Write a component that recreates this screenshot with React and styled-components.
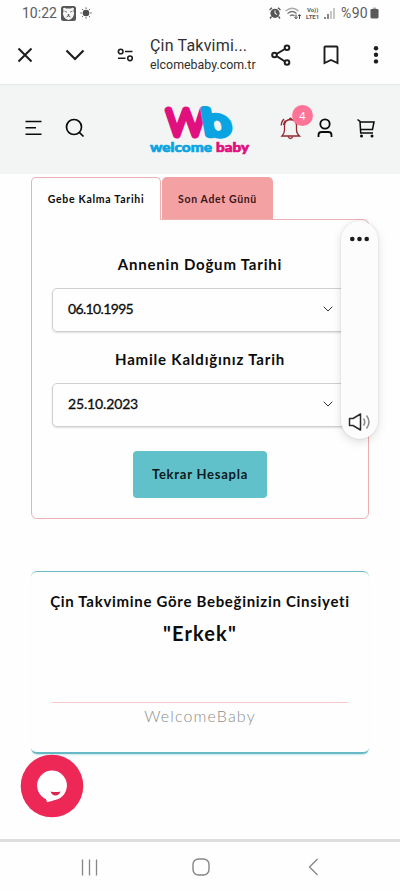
import React from 'react';
import styled, { createGlobalStyle } from 'styled-components';

const GlobalStyle = createGlobalStyle`
    * {
        box-sizing: border-box;
    }
    body {
        margin: 0;
        background: #fefefe;
        font-family: Lato, "Noto Sans", sans-serif;
        color: #0c0c0c;
    }
    svg {
        display: block;
        flex: none;
    }
`;

const Screen = styled.div`
    position: relative;
    display: flex;
    flex-direction: column;
    width: 400px;
    height: 891px;
    overflow: hidden;
`;

const StatusBar = styled.div`
    display: flex;
    justify-content: space-between;
    align-items: center;
    height: 26px;
    padding: 0 21px 0 22px;
    font-family: Roboto, sans-serif;
    font-size: 14px;
    color: #5c5c5c;
`;

const StatusGroup = styled.div`
    display: flex;
    align-items: center;
    gap: ${props => props.$gap}px;
    white-space: nowrap;
`;

const Lte = styled.div`
    width: 15px;
    font-size: 6px;
    line-height: 7px;
    font-weight: 700;
    text-align: center;
    div {
        height: 7px;
    }
`;

const Percent = styled.span`
    margin-left: 4px;
    letter-spacing: 0.3px;
`;

const BrowserBar = styled.div`
    display: flex;
    align-items: center;
    height: 59px;
    padding: 0 15px 0 16px;
    border-bottom: 1px solid #e7e9e9;
    color: #1d1d1d;
`;

const PageInfo = styled.div`
    width: 112px;
    margin: 0 8px 0 16px;
    font-family: Roboto, sans-serif;
    white-space: nowrap;
    color: #303030;
    h1 {
        margin: 0;
        font-size: 16px;
        line-height: 20px;
        font-weight: 400;
        letter-spacing: 0.2px;
    }
    p {
        margin: 0;
        font-size: 12.4px;
        line-height: 18px;
    }
`;

const BarIcon = styled.svg`
    margin-left: ${props => props.$left || 0}px;
    fill: none;
    stroke: currentColor;
    stroke-width: ${props => props.$weight || 2};
`;

const Header = styled.header`
    display: flex;
    align-items: center;
    height: 89px;
    padding: 0 22px 4px 24px;
    background: #f3f5f5;
    color: #0a0a0a;
`;

const Logo = styled.svg`
    margin: 9px 0 0 64px;
    overflow: visible;
    font-family: Lato, sans-serif;
    font-weight: 900;
    stroke-linejoin: round;
    stroke-linecap: round;
`;

const Bell = styled.div`
    position: relative;
    margin-left: 27px;
    color: #93282d;
`;

const Badge = styled.span`
    position: absolute;
    left: 12px;
    top: -11px;
    width: 21px;
    height: 21px;
    border-radius: 50%;
    background: #ff7396;
    color: #fff;
    font-size: 11px;
    line-height: 21px;
    text-align: center;
`;

const Main = styled.main`
    flex: 1;
    padding: 3px 31px 0;
`;

const Tabs = styled.div`
    display: flex;
    align-items: flex-start;
    gap: 1px;
    height: 42px;
`;

const Tab = styled.div`
    width: ${props => props.$width}px;
    height: ${props => (props.$active ? 43 : 42)}px;
    border: 1px solid ${props => (props.$active ? '#efb0b4' : '#f4a1a4')};
    border-bottom: 0;
    border-radius: 5px 5px 0 0;
    background: ${props => (props.$active ? '#fefefe' : '#f4a1a4')};
    color: ${props => (props.$active ? '#0c0c0c' : '#3b1719')};
    font-size: 10.5px;
    line-height: 43px;
    font-weight: 700;
    letter-spacing: ${props => props.$spacing}px;
    text-align: center;
    white-space: nowrap;
    z-index: 1;
`;

const Panel = styled.section`
    display: flex;
    flex-direction: column;
    height: 300px;
    padding: 31px 20px 0;
    border: 1px solid #efb0b4;
    border-radius: 0 6px 6px 6px;
`;

const Label = styled.div`
    height: 26px;
    font-size: 15px;
    line-height: 26px;
    font-weight: 700;
    letter-spacing: ${props => props.$spacing}px;
    text-align: center;
    white-space: nowrap;
`;

const Select = styled.div`
    display: flex;
    justify-content: space-between;
    align-items: center;
    height: 44px;
    margin: 11px 0 14px;
    padding: 0 14px 3px 15px;
    border: 1px solid #cfcfcf;
    border-radius: 5px;
    box-shadow: 0 1px 2px rgba(0, 0, 0, 0.13);
    font-size: 14px;
    letter-spacing: ${props => props.$spacing}px;
    -webkit-text-stroke: 0.3px #0c0c0c;
`;

const Button = styled.button`
    align-self: center;
    width: 134px;
    height: 47px;
    margin-top: 10px;
    padding: 0 0 1px;
    border: 0;
    border-radius: 4px;
    background: #61c1ca;
    color: #0d1b1c;
    font: 700 13px Lato, sans-serif;
    letter-spacing: 0.76px;
`;

const Result = styled.section`
    height: 183px;
    margin-top: 52px;
    padding: 16px 18px 0;
    border: solid #66b9c5;
    border-width: 1px 0 2px;
    border-radius: 6px;
    box-shadow: 0 2px 2px -1px rgba(90, 190, 200, 0.35);
    text-align: center;
    h2 {
        margin: 6px 0 0;
        font-size: 20px;
        line-height: 26px;
        font-weight: 700;
        letter-spacing: 1.1px;
    }
    hr {
        height: 1px;
        margin: 56px 3px 0;
        border: 0;
        background: #f8c9cc;
    }
    p {
        margin: 0;
        font-size: 16px;
        line-height: 25px;
        font-weight: 300;
        letter-spacing: 1.15px;
        color: #8d8d8d;
    }
`;

const VolumePanel = styled.aside`
    position: absolute;
    left: 341px;
    top: 221px;
    display: flex;
    flex-direction: column;
    align-items: center;
    justify-content: space-between;
    width: 37px;
    height: 218px;
    padding: 15px 0 7px;
    border-radius: 19px;
    background: #fcfcfc;
    box-shadow: 0 3px 10px rgba(0, 0, 0, 0.13), 0 0 2px rgba(0, 0, 0, 0.13);
    z-index: 2;
`;

const ChatButton = styled.div`
    position: absolute;
    left: 20px;
    top: 754px;
`;

const NavBar = styled.nav`
    display: flex;
    align-items: center;
    height: 52px;
    padding: 1px 81px 0;
    border-top: 3px solid #dedede;
    color: #858585;
`;

const Chevron = () => (
    <svg width="10" height="6" viewBox="0 0 10 6" fill="none" stroke="#333" strokeWidth="1">
        <path d="M0.7 0.7 5 5 9.3 0.7" />
    </svg>
);

const Status = () => (
    <StatusBar>
        <StatusGroup $gap={4}>
            <span>10:22</span>
            <svg width="15" height="15" viewBox="0 0 15 15">
                <rect width="15" height="15" rx="2.5" fill="#565656" />
                <path d="M2 2.5Q3.5 1 5 2.5h5Q11.5 1 13 2.5L12.5 5Q14 8 12 11Q10 14 7.5 14T3 11Q1 8 2.5 5Z" fill="#f5f5f5" />
                <path d="M3.5 5 6 6.3M11.5 5 9 6.3M5.5 11Q7.5 9 9.5 11" stroke="#565656" fill="none" strokeWidth="0.8" />
                <circle cx="7.5" cy="9" r="1" fill="#565656" />
            </svg>
            <svg width="12" height="12" viewBox="0 0 12 12">
                <circle cx="6" cy="6" r="3.3" fill="#4d4d4d" />
                <path
                    d="M6 0.3V2M6 10v1.7M0.3 6H2M10 6h1.7M2 2l1.1 1.1M8.9 8.9 10 10M2 10l1.1-1.1M8.9 3.1 10 2"
                    stroke="#5b5b5b"
                    strokeWidth="0.9"
                />
            </svg>
        </StatusGroup>
        <StatusGroup $gap={2}>
            <svg width="12" height="12" viewBox="0 0 12 12" fill="#555">
                <circle cx="6" cy="6.3" r="4.6" />
                <path d="M0.5 3 3 0.8M11.5 3 9 0.8M2.5 9.5 1 11.5M9.5 9.5 11 11.5" stroke="#555" strokeWidth="1.4" />
                <path d="M6 3.5v3l2.2 1" stroke="#fff" fill="none" />
            </svg>
            <svg width="20" height="13" viewBox="-3 0 17 13" fill="none" stroke="#777">
                <path d="M-2 4Q5-1.5 11 4" stroke="#aaa" strokeWidth="1.3" />
                <path d="M0 6.5Q5 2.5 9 6.5M2.5 9Q5 7 7 9" strokeWidth="1.3" />
                <path d="M8.5 7.5v4.2M7 10.2l1.5 1.5 1.5-1.5M12 12V7.7M10.5 9.2l1.5-1.5L13.5 9.2" stroke="#444" />
            </svg>
            <Lte>
                <div>Vo))</div>
                <div>LTE1</div>
            </Lte>
            <svg width="13" height="12" viewBox="-2 0 13 12">
                <path d="M1 10v2M4 7v5" stroke="#555" strokeWidth="1.4" />
                <path d="M7 4v8M10 1v11" stroke="#aaa" strokeWidth="1.3" />
            </svg>
            <Percent>%90</Percent>
            <svg width="9" height="12" viewBox="0 0 10 12" fill="#5a5a5a">
                <path d="M3 0h4v2H3z" fill="#aaa" />
                <rect x="0.5" y="1.5" width="9" height="10.5" rx="1.5" />
            </svg>
        </StatusGroup>
    </StatusBar>
);

const Browser = () => (
    <BrowserBar>
        <BarIcon width="18" height="18" viewBox="0 0 18 18">
            <path d="M2.5 2.5 15.5 15.5M15.5 2.5 2.5 15.5" />
        </BarIcon>
        <BarIcon $left={31} $weight={2.2} width="20" height="14" viewBox="0 0 20 14">
            <path d="M1.5 2.5 10 11 18.5 2.5" />
        </BarIcon>
        <BarIcon $left={32} $weight={1.6} width="17" height="14" viewBox="0 0 17 14">
            <circle cx="3.7" cy="3.5" r="2.3" />
            <circle cx="13" cy="10.3" r="2.3" />
            <path d="M8 3.5h7.5M1 10.3h7.5" />
        </BarIcon>
        <PageInfo>
            <h1>Çin Takvimi...</h1>
            <p>elcomebaby.com.tr</p>
        </PageInfo>
        <BarIcon $left={1} width="20" height="22" viewBox="0 0 20 22">
            <path d="M15.5 4 4 11l11.5 7.5" />
            <g fill="#fefefe">
                <circle cx="16" cy="3.7" r="2.3" />
                <circle cx="3.5" cy="11" r="2.3" />
                <circle cx="16" cy="18.5" r="2.3" />
            </g>
        </BarIcon>
        <BarIcon $left={32} $weight={1.9} width="16" height="20" viewBox="0 0 16 20">
            <path d="M1.5 18V2.5Q1.5 1.5 2.5 1.5H13.5Q14.5 1.5 14.5 2.5V18L8 15Z" />
        </BarIcon>
        <BarIcon $left={33} width="8" height="20" viewBox="0 0 8 20">
            <g fill="currentColor" stroke="none">
                <circle cx="4" cy="3.2" r="2.2" />
                <circle cx="4" cy="9.8" r="2.2" />
                <circle cx="4" cy="16.4" r="2.2" />
            </g>
        </BarIcon>
    </BrowserBar>
);

const SiteHeader = () => (
    <Header>
        <BarIcon $weight={1.6} width="18" height="16" viewBox="0 0 18 16">
            <path d="M1.5 1.5h16M1.5 7.8h10.5M1.5 14.2h16" />
        </BarIcon>
        <BarIcon $left={23} $weight={1.7} width="20" height="20" viewBox="0 0 20 20">
            <circle cx="9" cy="9" r="7.5" />
            <path d="M14.3 14.3 18.5 18.5" />
        </BarIcon>
        <Logo width="104" height="56" viewBox="0 0 104 56">
            <text x="18" y="31" fontSize="36" fontWeight="100" textLength="38" lengthAdjust="spacingAndGlyphs" fill="#e0117f" stroke="#e0117f" strokeWidth="7">W</text>
            <text transform="translate(55 30.500) skewX(10)" fontFamily="'DejaVu Sans'" fontSize="34" fontWeight="200" textLength="29" lengthAdjust="spacingAndGlyphs" fill="#0ba4e2" stroke="#0ba4e2" strokeWidth="6.5">b</text>
            <text x="1" y="48" fontSize="13.5" textLength="62" lengthAdjust="spacingAndGlyphs" fill="#0ba4e2" stroke="#0ba4e2" strokeWidth="0.7">welcome</text>
            <text x="67" y="48" fontSize="13.5" textLength="33" lengthAdjust="spacingAndGlyphs" fill="#e0117f" stroke="#e0117f" strokeWidth="0.7">baby</text>
        </Logo>
        <Bell>
            <svg width="21" height="24" viewBox="0 0 21 24" fill="none" stroke="currentColor" strokeWidth="1.3">
                <path d="M2 20Q4.5 17.5 4.5 14V9.5Q4.5 4 10.5 3.5Q16.5 4 16.5 9.5V14Q16.5 17.5 19.5 20Z" />
                <path d="M8 20.5Q10.5 24.5 13 20.5M9.2 3.5Q10.5 0.8 11.8 3.5M1.2 9.5Q1.5 5 4 3M3.5 9Q4 6 5.5 4.5" />
            </svg>
            <Badge>4</Badge>
        </Bell>
        <BarIcon $left={16} $weight={1.8} width="16" height="20" viewBox="0 0 16 20">
            <circle cx="8" cy="6" r="4.7" />
            <path d="M1.5 19V17Q1.5 14 4.5 14H11.5Q14.5 14 14.5 17V19" />
        </BarIcon>
        <BarIcon $left={23} $weight={1.5} width="20" height="20" viewBox="0 0 20 20">
            <path d="M1.5 1.5 4 3.5 4.7 15H17M4 4H18L16.5 11.5H4.5" />
            <g fill="currentColor" stroke="none">
                <circle cx="5.5" cy="18" r="1.5" />
                <circle cx="16" cy="18" r="1.5" />
            </g>
        </BarIcon>
    </Header>
);

export default function App() {
    return (
        <Screen>
            <GlobalStyle />
            <Status />
            <Browser />
            <SiteHeader />
            <Main>
                <Tabs>
                    <Tab $active $width={130} $spacing={0.72}>Gebe Kalma Tarihi</Tab>
                    <Tab $width={111} $spacing={0.65}>Son Adet Günü</Tab>
                </Tabs>
                <Panel>
                    <Label $spacing={0.8}>Annenin Doğum Tarihi</Label>
                    <Select $spacing={-0.65}>06.10.1995 <Chevron /></Select>
                    <Label $spacing={0.8}>Hamile Kaldığınız Tarih</Label>
                    <Select $spacing={-0.15}>25.10.2023 <Chevron /></Select>
                    <Button>Tekrar Hesapla</Button>
                </Panel>
                <Result>
                    <Label $spacing={0.7}>Çin Takvimine Göre Bebeğinizin Cinsiyeti</Label>
                    <h2>"Erkek"</h2>
                    <hr />
                    <p>WelcomeBaby</p>
                </Result>
            </Main>
            <VolumePanel>
                <svg width="21" height="6" viewBox="0 0 21 6" fill="#1c1c1c">
                    <circle cx="3.3" cy="3" r="2.3" />
                    <circle cx="10.5" cy="3" r="2.3" />
                    <circle cx="17.7" cy="3" r="2.3" />
                </svg>
                <svg width="23" height="20" viewBox="0 0 23 20" fill="none" strokeWidth="1.5">
                    <path d="M1.5 6.5H5L12.5 2V18L5 13.5H1.5Z" stroke="#2b2b2b" strokeLinejoin="round" />
                    <path d="M15.5 6.5Q18 10 15.5 13.5M18.5 3.5Q23.5 10 18.5 16.5" stroke="#8b8b8b" />
                </svg>
            </VolumePanel>
            <ChatButton>
                <svg width="64" height="64" viewBox="0 0 64 64">
                    <circle cx="32" cy="32" r="31.3" fill="#ed2756" />
                    <circle cx="32" cy="31.5" r="14.9" fill="#fff" />
                    <path d="M25 42 27 48.3Q37 46 44 40Z" fill="#fff" />
                    <path d="M30.5 37.5Q35.5 38.5 40.5 37.5Q39 41.5 35.5 41.5T30.5 37.5Z" fill="#d92550" />
                </svg>
            </ChatButton>
            <NavBar>
                <BarIcon $weight={1.3} width="17" height="17" viewBox="0 0 17 17">
                    <path d="M1.5 0.5v16M8.5 0.5v16M15.5 0.5v16" />
                </BarIcon>
                <BarIcon $left={94} $weight={1.4} width="18" height="18" viewBox="0 0 18 18">
                    <rect x="1" y="1" width="16" height="16" rx="5.5" />
                </BarIcon>
                <BarIcon $left={98} $weight={1.3} width="11" height="18" viewBox="0 0 11 18">
                    <path d="M9.5 1 1.5 9 9.5 17" />
                </BarIcon>
            </NavBar>
        </Screen>
    );
}
